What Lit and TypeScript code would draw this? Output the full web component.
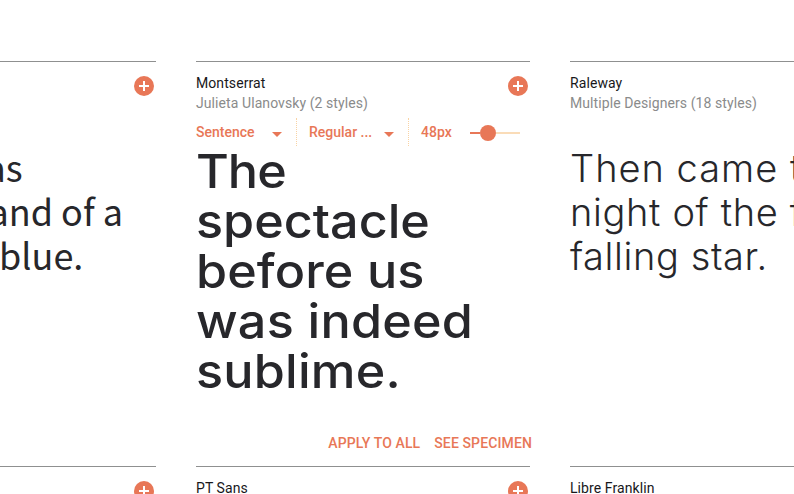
import { LitElement, html, css, nothing } from "lit";
import { customElement, property } from "lit/decorators.js";

@customElement("add-button")
export class AddButton extends LitElement {
  static styles = css`
    :host { display: block; width: 20px; height: 20px; }
    svg { display: block; }
  `;
  render() {
    return html`<svg width="20" height="20" viewBox="0 0 20 20">
      <circle cx="10" cy="10" r="10" fill="#e87757" />
      <path d="M10 5v10M5 10h10" stroke="#fff" stroke-width="2" />
    </svg>`;
  }
}

@customElement("font-card")
export class FontCard extends LitElement {
  @property() name = "";
  @property() designer = "";
  @property() face = "";
  @property({ type: Boolean }) active = false;
  @property({ attribute: false }) lines: [string, number][] = [];

  static styles = css`
    :host {
      display: flex; flex-direction: column; box-sizing: border-box;
      border-top: 1px solid #8f9090; height: 405px;
      font: 400 14px/20px Roboto, sans-serif; color: #27272b;
    }
    header { display: flex; justify-content: space-between; height: 40px; padding: 11px 2px 0 0; }
    .name { font-weight: 450; letter-spacing: 0.08px; color: #18181b; }
    .designer { color: #8a8b8b; letter-spacing: 0.08px; }
    add-button { margin-top: 3px; }
    .toolbar { display: flex; align-items: center; height: 28px; margin: 5px 0 -28px; color: #e87757; font-weight: 500; }
    .select { display: flex; align-items: center; justify-content: space-between; box-sizing: border-box; height: 28px; border-right: 1px dotted #f9d3a4; }
    .case { width: 101px; padding-right: 14px; }
    .weight { width: 112px; padding: 0 14px 0 12px; }
    .caret { width: 0; height: 0; margin-top: 4px; border: 5px solid transparent; border-top-color: #e87757; border-bottom: 0; }
    .size { width: 61px; padding-left: 12px; box-sizing: border-box; }
    .slider { display: flex; align-items: center; width: 50px; margin-top: 2px; }
    .filled { width: 10px; height: 2px; background: #e87757; }
    .knob { width: 16px; height: 16px; border-radius: 50%; background: #e87757; }
    .rest { flex: 1; height: 2px; background: #fadcb8; }
    .sample { margin-top: 33px; transform-origin: left top; }
    .line { white-space: nowrap; }
    .source { font: 400 36px/44px "Noto Sans CJK SC", sans-serif; margin-top: 31px; }
    .raleway { font: 300 38px/44px Inter, sans-serif; }
    .montserrat { font: 500 47px/50px Inter, sans-serif; margin-top: 28px; transform: scaleX(1.07); }
    .actions { display: flex; justify-content: flex-end; gap: 14px; margin: auto -2px 13px 0; color: #e87757; font-weight: 500; letter-spacing: 0.12px; }
  `;

  render() {
    return html`
      <header>
        <div>
          <div class="name">${this.name}</div>
          <div class="designer">${this.designer}</div>
        </div>
        <add-button></add-button>
      </header>
      ${this.active
        ? html`<div class="toolbar">
            <div class="select case"><span>Sentence</span><i class="caret"></i></div>
            <div class="select weight"><span>Regular ...</span><i class="caret"></i></div>
            <div class="size">48px</div>
            <div class="slider"><i class="filled"></i><i class="knob"></i><i class="rest"></i></div>
          </div>`
        : nothing}
      <div class="sample ${this.face}">
        ${this.lines.map(([text, tracking]) => html`<div class="line" style="letter-spacing:${tracking}px">${text}</div>`)}
      </div>
      ${this.active
        ? html`<div class="actions"><span>APPLY TO ALL</span><span>SEE SPECIMEN</span></div>`
        : nothing}
    `;
  }
}

@customElement("app-root")
export class AppRoot extends LitElement {
  static styles = css`
    :host { display: block; height: 494px; overflow: hidden; background: #fff; }
    .grid { display: grid; grid-template-columns: repeat(3, 334px); column-gap: 40px; margin: 61px 0 0 -178px; }
  `;

  private cards = [
    { name: "", designer: "", face: "source", active: false,
      lines: [["The sky was", 0], ["cloudless and of a", 0], ["deep dark blue.", 0]] },
    { name: "Montserrat", designer: "Julieta Ulanovsky (2 styles)", face: "montserrat", active: true,
      lines: [["The", -0.9], ["spectacle", 0], ["before us", 0.1], ["was indeed", 0.2], ["sublime.", 0.2]] },
    { name: "Raleway", designer: "Multiple Designers (18 styles)", face: "raleway", active: false,
      lines: [["Then came the", 1], ["night of the first", 0.65], ["falling star.", 0.6]] },
    { name: "", designer: "", face: "", active: false, lines: [] },
    { name: "PT Sans", designer: "", face: "", active: false, lines: [] },
    { name: "Libre Franklin", designer: "", face: "", active: false, lines: [] },
  ] as { name: string; designer: string; face: string; active: boolean; lines: [string, number][] }[];

  render() {
    return html`<div class="grid">
      ${this.cards.map((c) => html`<font-card .name=${c.name} .designer=${c.designer} .face=${c.face}
        .active=${c.active} .lines=${c.lines}></font-card>`)}
    </div>`;
  }
}
